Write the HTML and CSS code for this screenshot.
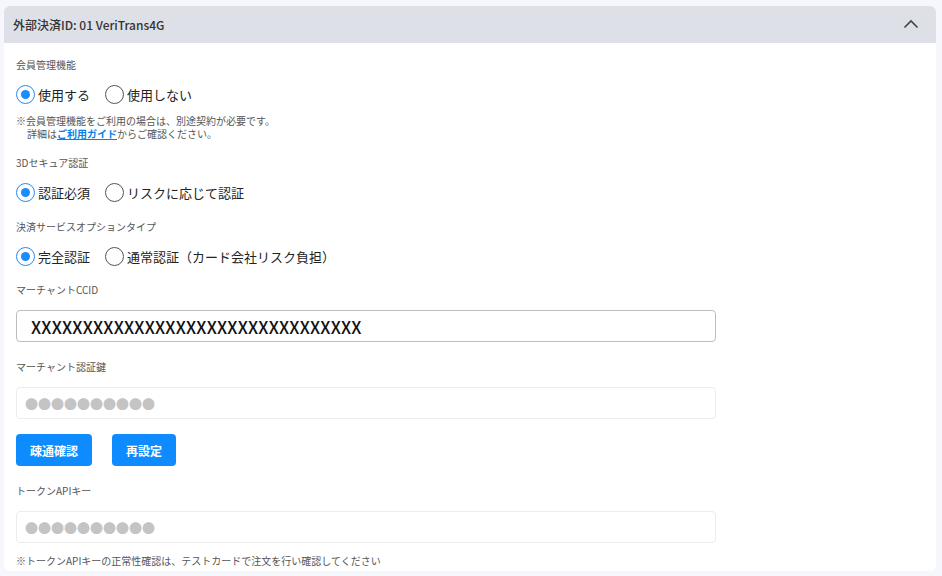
FILE: index.html
```html
<!DOCTYPE html>
<html lang="ja">
<head>
<meta charset="utf-8">
<link rel="stylesheet" href="styles.css">
</head>
<body>
<section class="card">
  <header class="card-head">
    <span class="card-title">外部決済ID: 01 VeriTrans4G</span>
    <svg class="chev" width="16" height="10" viewBox="0 0 16 10"><path d="M1.5 8.5 L8 2 L14.5 8.5" fill="none" stroke="#444" stroke-width="1.6"/></svg>
  </header>
  <div class="card-body">
    <div class="field">
      <div class="label">会員管理機能</div>
      <div class="radios">
        <label class="radio"><span class="dot on"></span>使用する</label>
        <label class="radio"><span class="dot"></span>使用しない</label>
      </div>
      <div class="note">
        <span class="note-line">※会員管理機能をご利用の場合は、別途契約が必要です。</span>
        <span class="note-line indent">詳細は<a href="#">ご利用ガイド</a>からご確認ください。</span>
      </div>
    </div>
    <div class="field">
      <div class="label">3Dセキュア認証</div>
      <div class="radios">
        <label class="radio"><span class="dot on"></span>認証必須</label>
        <label class="radio"><span class="dot"></span>リスクに応じて認証</label>
      </div>
    </div>
    <div class="field">
      <div class="label">決済サービスオプションタイプ</div>
      <div class="radios">
        <label class="radio"><span class="dot on"></span>完全認証</label>
        <label class="radio"><span class="dot"></span>通常認証（カード会社リスク負担）</label>
      </div>
    </div>
    <div class="field shift">
      <div class="label lab-in">マーチャントCCID</div>
      <div class="input strong">XXXXXXXXXXXXXXXXXXXXXXXXXXXXXXXX</div>
    </div>
    <div class="field">
      <div class="label lab-in">マーチャント認証鍵</div>
      <div class="input masked">●●●●●●●●●●</div>
    </div>
    <div class="buttons">
      <button class="btn">疎通確認</button>
      <button class="btn">再設定</button>
    </div>
    <div class="field">
      <div class="label lab-in">トークンAPIキー</div>
      <div class="input masked">●●●●●●●●●●</div>
      <div class="note last"><span class="note-line">※トークンAPIキーの正常性確認は、テストカードで注文を行い確認してください</span></div>
    </div>
  </div>
</section>
</body>
</html>
```
FILE: styles.css
```css
* { box-sizing: border-box; }
html, body { margin: 0; padding: 0; }
body {
  background: #f6f7fc;
  font-family: "Noto Sans CJK JP", "Noto Sans", sans-serif;
  color: #333;
  padding: 6px 6px 0 4px;
  height: 576px;
  overflow: hidden;
}
.card {
  width: 932px;
  background: #fff;
  border-radius: 6px;
}
.card-head {
  height: 37px;
  background: #dee0e8;
  border-radius: 6px 6px 0 0;
  display: flex;
  align-items: center;
  justify-content: space-between;
  padding: 0 17px 0 9px;
}
.card-title {
  font-size: 12px;
  font-weight: 500;
  color: #333;
}
.chev { display: block; margin-top: -1px; }
.card-body {
  padding: 15px 12px 4px 12px;
  display: flex;
  flex-direction: column;
  gap: 18px;
}
.field { display: flex; flex-direction: column; }
.field:nth-child(2) { margin-top: -2px; }
.field.shift { margin-top: -1px; }
.label {
  font-size: 10px;
  line-height: 14px;
  color: #555;
  margin-bottom: 12px;
}
.label.lab-in { margin-bottom: 13px; }
.radios { display: flex; gap: 15px; height: 20px; align-items: center; }
.radio {
  display: flex;
  align-items: center;
  font-size: 13px;
  color: #222;
  gap: 3px;
  font-weight: 400;
}
.dot {
  width: 19px;
  height: 19px;
  border: 1.5px solid #555;
  border-radius: 50%;
  display: inline-flex;
  align-items: center;
  justify-content: center;
}
.dot.on { border-color: #1a8cff; }
.dot.on::after {
  content: "";
  width: 9px;
  height: 9px;
  border-radius: 50%;
  background: #1a8cff;
}
.note {
  margin: 10px 0 0;
  font-size: 10px;
  line-height: 13px;
  color: #555;
}
.note-line { display: block; }
.note.last { margin-top: 11px; }
.indent { padding-left: 11px; }
.note a { color: #0a7fe6; font-weight: 700; text-decoration: underline; }
.input {
  width: 700px;
  height: 32px;
  border: 1px solid #ececec;
  border-radius: 4px;
  display: flex;
  align-items: center;
  padding-left: 8px;
}
.input.strong {
  border-color: #bdbdbd;
  padding-left: 14px;
  font-size: 17px;
  font-weight: 500;
  color: #111;
  letter-spacing: 0.2px;
}
.input.masked {
  color: #c4c4c4;
  font-size: 13px;
  letter-spacing: 0;
}
.buttons { display: flex; gap: 20px; margin-top: -3px; }
.btn {
  height: 32px;
  border: 0;
  border-radius: 4px;
  background: #0d8bff;
  color: #fff;
  font-family: inherit;
  font-size: 12px;
  font-weight: 700;
  padding: 0 14px;
}
```
